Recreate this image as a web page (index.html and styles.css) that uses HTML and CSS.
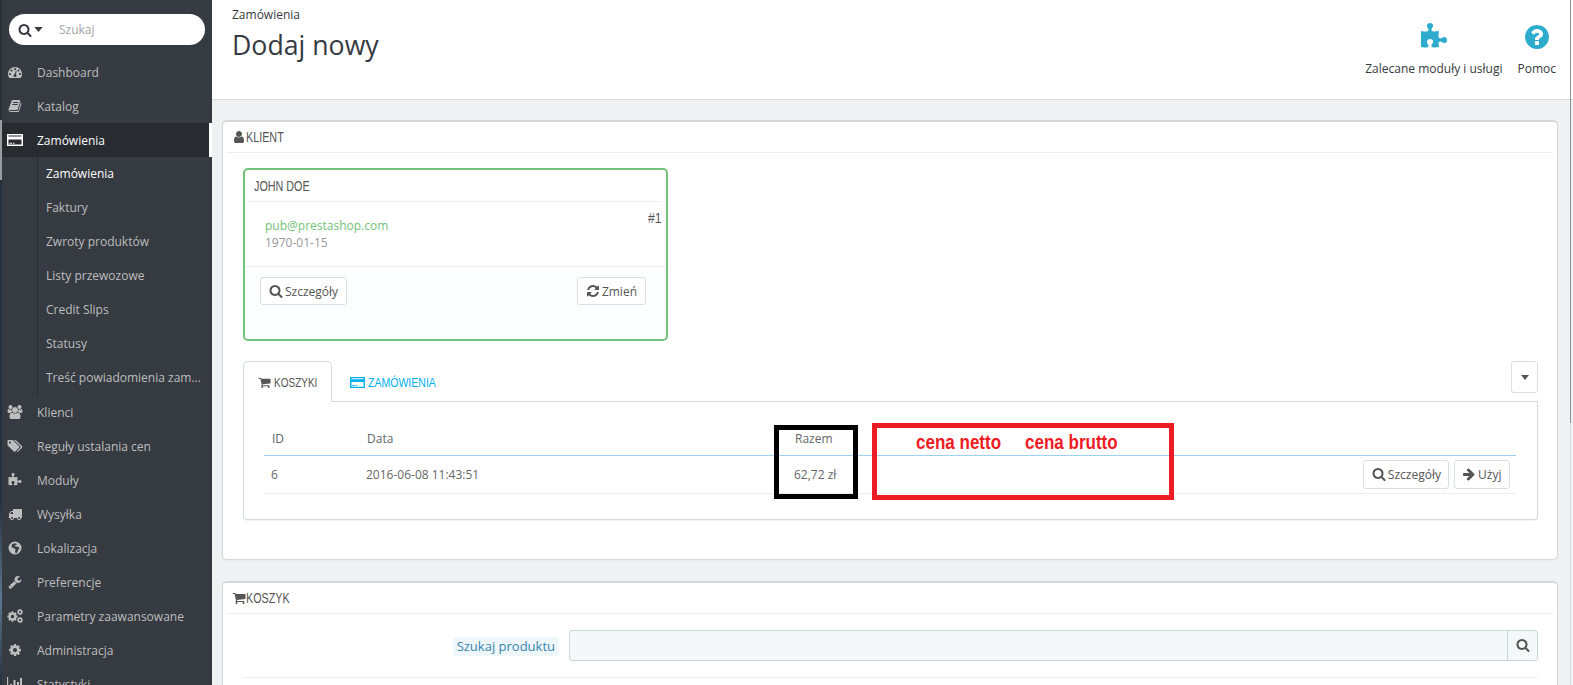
FILE: index.html
```html
<!DOCTYPE html>
<html lang="pl">
<head>
<meta charset="utf-8">
<title>Dodaj nowy</title>
<link rel="stylesheet" href="styles.css">
</head>
<body>
<svg class="sprite" xmlns="http://www.w3.org/2000/svg">
  <symbol id="i-search" viewBox="0 0 1792 1792"><path d="M1216 832q0-185-131.500-316.500t-316.500-131.500-316.500 131.500-131.500 316.500 131.500 316.500 316.500 131.500 316.500-131.500 131.500-316.500zm512 832q0 52-38 90t-90 38q-54 0-90-38l-343-342q-179 124-399 124-143 0-273.500-55.500t-225-150-150-225-55.500-273.500 55.500-273.500 150-225 225-150 273.500-55.500 273.500 55.500 225 150 150 225 55.500 273.500q0 220-124 399l343 343q37 37 37 90z"/></symbol>
  <symbol id="i-user" viewBox="0 0 1792 1792"><path d="M1536 1399q0 109-62.500 187t-150.500 78h-854q-88 0-150.500-78t-62.500-187q0-85 8.500-160.500t31.500-152 58.500-131 94-89 134.500-34.500q131 128 313 128t313-128q76 0 134.500 34.500t94 89 58.500 131 31.500 152 8.500 160.500zm-256-887q0 159-112.500 271.500t-271.500 112.500-271.500-112.500-112.500-271.500 112.500-271.500 271.500-112.500 271.500 112.500 112.500 271.500z"/></symbol>
  <symbol id="i-cart" viewBox="0 0 1792 1792"><path d="M704 1536q0 52-38 90t-90 38-90-38-38-90 38-90 90-38 90 38 38 90zm896 0q0 52-38 90t-90 38-90-38-38-90 38-90 90-38 90 38 38 90zm128-1088v512q0 24-16.500 42.500t-40.500 21.500l-1044 122q13 60 13 70 0 16-24 64h920q26 0 45 19t19 45-19 45-45 19h-1024q-26 0-45-19t-19-45q0-11 8-31.500t16-36 21.500-40 15.500-29.500l-177-823h-204q-26 0-45-19t-19-45 19-45 45-19h256q16 0 28.500 6.500t19.500 15.500 13 24.500 8 26 5.500 29.500 4.500 26h1201q26 0 45 19t19 45z"/></symbol>
  <symbol id="i-card" viewBox="0 0 16 14"><path fill-rule="evenodd" d="M0 1h16v12H0zM1.500 2.500v1h13v-1zM1.500 6.500v5h13v-5zM2.500 9.800h2.500v.9H2.500zM6 9.800h1.500v.9H6z"/></symbol>
  <symbol id="i-refresh" viewBox="0 0 1792 1792"><path d="M1639 1056q0 5-1 7-64 268-268 434.500t-478 166.500q-146 0-282.500-55t-243.500-157l-129 129q-19 19-45 19t-45-19-19-45v-448q0-26 19-45t45-19h448q26 0 45 19t19 45-19 45l-137 137q71 66 161 102t187 36q134 0 250-65t186-179q11-17 53-117 8-23 30-23h192q13 0 22.500 9.500t9.500 22.500zm25-800v448q0 26-19 45t-45 19h-448q-26 0-45-19t-19-45 19-45l138-138q-148-137-349-137-134 0-250 65t-186 179q-11 17-53 117-8 23-30 23h-199q-13 0-22.500-9.500t-9.500-22.500v-7q65-268 270-434.500t480-166.500q146 0 284 55.500t245 156.500l130-129q19-19 45-19t45 19 19 45z"/></symbol>
  <symbol id="i-arrow" viewBox="0 0 1792 1792"><path d="M1600 960q0 54-37 91l-651 651q-39 37-91 37-51 0-90-37l-75-75q-38-38-38-91t38-91l293-293h-704q-52 0-84.500-37.500t-32.500-90.500v-128q0-53 32.500-90.500t84.500-37.500h704l-293-294q-38-36-38-90t38-90l75-75q38-38 90-38 53 0 91 38l651 651q37 35 37 90z"/></symbol>
  <symbol id="i-puzzle" viewBox="0 0 1792 1792"><path d="M1728 1098q0 81-44.500 135t-123.500 54q-41 0-77.500-17.500t-59-38-56.500-38-71-17.500q-110 0-110 124 0 39 16 115t15 115v5q-22 0-33 1-34 3-97.500 11.500t-115.500 13.500-98 5q-61 0-103-26.500t-42-83.500q0-37 17.500-71t38-56.500 38-59 17.500-77.500q0-79-54-123.500t-135-44.500q-84 0-143 45.500t-59 127.500q0 43 15 83t33.500 64.500 33.500 53 15 50.500q0 45-46 89-37 35-117 35-95 0-245-24-9-2-27.500-4t-27.500-4l-13-2q-1 0-3-1-2 0-2-1v-1024q2 1 17.500 3.500t34 5 21.500 3.500q150 24 245 24 80 0 117-35 46-44 46-89 0-22-15-50.500t-33.500-53-33.500-64.500-15-83q0-82 59-127.500t144-45.500q80 0 134 44.500t54 123.500q0 41-17.500 77.500t-38 59-38 56.500-17.500 71q0 57 42 83.500t103 26.500q64 0 180-15t163-17v2q-1 2-3.500 17.500t-5 34-3.500 21.500q-24 150-24 245 0 80 35 117 44 46 89 46 22 0 50.500-15t53-33.500 64.500-33.500 83-15q82 0 127.500 59t45.500 143z"/></symbol>
  <symbol id="i-help" viewBox="0 0 1792 1792"><path d="M1024 1376v-192q0-14-9-23t-23-9h-192q-14 0-23 9t-9 23v192q0 14 9 23t23 9h192q14 0 23-9t9-23zm256-672q0-88-55.500-163t-138.500-116-170-41q-243 0-371 213-15 24 8 42l132 100q7 6 19 6 16 0 25-12 53-68 86-92 34-24 86-24 48 0 85.500 26t37.500 59q0 38-20 61t-68 45q-63 28-115.500 86.500t-52.500 125.500v36q0 14 9 23t23 9h192q14 0 23-9t9-23q0-19 21.500-49.500t54.500-49.500q32-18 49-28.500t46-35 44.500-48 28-60.500 12.500-81zm384 192q0 209-103 385.500t-279.500 279.500-385.500 103-385.500-103-279.500-279.500-103-385.500 103-385.500 279.500-279.500 385.500-103 385.500 103 279.500 279.500 103 385.500z"/></symbol>
  <symbol id="i-gauge" viewBox="0 0 1792 1792"><path d="M384 1152q0-53-37.500-90.500t-90.500-37.500-90.500 37.500-37.500 90.500 37.500 90.500 90.500 37.500 90.500-37.500 37.500-90.500zm192-448q0-53-37.500-90.500t-90.500-37.500-90.500 37.500-37.500 90.500 37.500 90.500 90.500 37.500 90.500-37.500 37.500-90.500zm428 481l101-382q6-26-7.500-48.500t-38.500-29.500-48 6.500-30 39.500l-101 382q-60 5-107 43.500t-63 98.500q-20 77 20 146t117 89 146-20 89-117q16-60-6-117t-72-91zm660-33q0-53-37.500-90.500t-90.500-37.500-90.500 37.500-37.500 90.500 37.500 90.500 90.500 37.500 90.500-37.500 37.500-90.500zm-640-640q0-53-37.500-90.500t-90.500-37.500-90.500 37.500-37.500 90.500 37.500 90.500 90.500 37.500 90.500-37.500 37.500-90.500zm448 192q0-53-37.500-90.500t-90.500-37.500-90.500 37.500-37.500 90.500 37.500 90.500 90.500 37.500 90.500-37.500 37.500-90.500zm320 448q0 261-141 483-19 29-54 29h-1402q-35 0-54-29-141-221-141-483 0-182 71-348t191-286 286-191 348-71 348 71 286 191 191 286 71 348z"/></symbol>
  <symbol id="i-book" viewBox="0 0 1792 1792"><path d="M1703 478q40 57 18 129l-275 906q-19 64-76.500 107.500t-122.500 43.500h-923q-77 0-148.500-53.500t-99.500-131.500q-24-67-2-127 0-4 3-27t4-37q1-8-3-21.500t-3-19.500q2-11 8-21t16.500-23.500 16.500-23.500q23-38 45-91.500t30-91.500q3-10 .5-30t-.5-28q3-11 17-28t17-23q21-36 42-92t25-90q1-9-2.500-32t.5-28q4-13 22-30.500t22-22.500q19-26 42.500-84.500t27.500-96.500q1-8-3-25.500t-2-26.500q2-8 9-18t18-23 17-21q8-12 16.500-30.500t15-35 16-36 19.500-32 26.500-23.500 36-11.500 47.500 5.500l-1 3q38-9 51-9h761q74 0 114 56t18 130l-274 906q-36 119-71.500 153.500t-128.500 34.500h-869q-27 0-38 15-11 16-1 43 24 70 144 70h923q29 0 56-15.500t35-41.500l300-987q7-22 5-57 38 15 59 43zm-1064 2q-4 13 2 22.500t20 9.500h608q13 0 25.500-9.500t16.500-22.500l21-64q4-13-2-22.500t-20-9.500h-608q-13 0-25.500 9.500t-16.500 22.500zm-83 256q-4 13 2 22.500t20 9.500h608q13 0 25.500-9.500t16.500-22.500l21-64q4-13-2-22.500t-20-9.500h-608q-13 0-25.500 9.500t-16.500 22.500z"/></symbol>
  <symbol id="i-users" viewBox="0 0 1920 1792"><path d="M593 896q-162 5-265 128h-134q-82 0-138-40.500t-56-118.500q0-353 124-353 6 0 43.500 21t97.500 42.500 119 21.500q67 0 133-23-5 37-5 66 0 139 81 256zm1071 637q0 120-73 189.500t-194 69.500h-874q-121 0-194-69.500t-73-189.500q0-53 3.500-103.500t14-109 26.500-108.500 43-97.500 62-81 85.500-53.500 111.500-20q10 0 43 21.500t73 48 107 48 135 21.500 135-21.500 107-48 73-48 43-21.500q61 0 111.500 20t85.500 53.500 62 81 43 97.500 26.500 108.500 14 109 3.500 103.500zm-1024-1277q0 106-75 181t-181 75-181-75-75-181 75-181 181-75 181 75 75 181zm704 384q0 159-112.500 271.500t-271.500 112.500-271.500-112.500-112.500-271.500 112.500-271.500 271.500-112.500 271.500 112.500 112.500 271.500zm576 225q0 78-56 118.500t-138 40.500h-134q-103-123-265-128 81-117 81-256 0-29-5-66 66 23 133 23 59 0 119-21.500t97.500-42.500 43.500-21q124 0 124 353zm-128-609q0 106-75 181t-181 75-181-75-75-181 75-181 181-75 181 75 75 181z"/></symbol>
  <symbol id="i-tags" viewBox="0 0 1920 1792"><path d="M448 448q0-53-37.500-90.500t-90.500-37.500-90.500 37.500-37.500 90.500 37.500 90.500 90.500 37.500 90.500-37.500 37.500-90.500zm1067 576q0 53-37 90l-491 492q-39 37-91 37-53 0-90-37l-715-716q-38-37-64.500-101t-26.500-117v-416q0-52 38-90t90-38h416q53 0 117 26.500t102 64.500l715 714q37 39 37 91zm384 0q0 53-37 90l-491 492q-39 37-91 37-36 0-59-14t-53-45l470-470q37-37 37-90 0-52-37-91l-715-714q-38-38-102-64.500t-117-26.500h224q53 0 117 26.500t102 64.500l715 714q37 39 37 91z"/></symbol>
  <symbol id="i-truck" viewBox="0 0 1792 1792"><path d="M640 1408q0-52-38-90t-90-38-90 38-38 90 38 90 90 38 90-38 38-90zm-384-512h384v-256h-158q-13 0-22 9l-195 195q-9 9-9 22v30zm1280 512q0-52-38-90t-90-38-90 38-38 90 38 90 90 38 90-38 38-90zm256-1088v1024q0 15-4 26.500t-13.500 18.500-16.500 11.500-23.500 6-22.500 2-25.500 0-22.500-.5q0 106-75 181t-181 75-181-75-75-181h-384q0 106-75 181t-181 75-181-75-75-181h-64q-3 0-22.500.5t-25.500 0-22.500-2-23.500-6-16.500-11.500-13.500-18.500-4-26.500q0-26 19-45t45-19v-320q0-8-.5-35t0-38 2.500-34.500 6.500-37 14-30.500 22.500-30l198-198q19-19 50.500-32t58.500-13h160v-192q0-26 19-45t45-19h1024q26 0 45 19t19 45z"/></symbol>
  <symbol id="i-globe" viewBox="0 0 14 14"><path fill-rule="evenodd" d="M7 .5a6.500 6.500 0 1 1 0 13a6.500 6.500 0 0 1 0-13zM5.500 2.500 4 3.500 3.500 5.500 5 7l2 .5.5 1.500L7 11l1 1.500 1.500-1.500.5-2 1.500-1.500-1-1.500L8 5.500 6.500 5 7.500 4 9 3.500 8 2.500z"/></symbol>
  <symbol id="i-wrench" viewBox="0 0 1792 1792"><path d="M448 1472q0-26-19-45t-45-19-45 19-19 45 19 45 45 19 45-19 19-45zm644-420l-682 682q-37 37-90 37-52 0-91-37l-106-108q-38-36-38-90 0-53 38-91l681-681q39 98 114.500 173.500t173.500 114.500zm634-435q0 39-23 106-47 134-164.500 217.500t-258.500 83.500q-185 0-316.500-131.500t-131.500-316.500 131.500-316.500 316.500-131.500q58 0 121.500 16.500t107.500 46.500q16 11 16 28t-16 28l-293 169v224l193 107q5-3 79-48.500t135.500-81 70.500-35.500q15 0 23.500 10t8.500 25z"/></symbol>
  <symbol id="i-cog" viewBox="0 0 1792 1792"><path d="M1152 896q0-106-75-181t-181-75-181 75-75 181 75 181 181 75 181-75 75-181zm512-109v222q0 12-8 23t-20 13l-185 28q-19 54-39 91 35 50 107 138 10 12 10 25t-9 23q-27 37-99 108t-94 71q-12 0-26-9l-138-108q-44 23-91 38-16 136-29 186-7 28-36 28h-222q-14 0-24.500-8.500t-11.500-21.500l-28-184q-49-16-90-37l-141 107q-10 9-25 9-14 0-25-11-126-114-165-168-7-10-7-23 0-12 8-23 15-21 51-66.500t54-70.500q-27-50-41-99l-183-27q-13-2-21-12.500t-8-23.500v-222q0-12 8-23t19-13l186-28q14-46 39-92-40-57-107-138-10-12-10-24 0-10 9-23 26-36 98.500-107.500t94.500-71.500q13 0 26 10l138 107q44-23 91-38 16-136 29-186 7-28 36-28h222q14 0 24.500 8.500t11.500 21.500l28 184q49 16 90 37l142-107q9-9 24-9 13 0 25 10 129 119 165 170 7 8 7 22 0 12-8 23-15 21-51 66.500t-54 70.500q26 50 41 98l183 28q13 2 21 12.500t8 23.500z"/></symbol>
  <symbol id="i-cogs" viewBox="0 0 16 14"><use href="#i-cog" x="-.5" y="1.500" width="12" height="12"/><use href="#i-cog" x="9.500" y="-.5" width="7" height="7"/><use href="#i-cog" x="9.500" y="7.500" width="7" height="7"/></symbol>
  <symbol id="i-chart" viewBox="0 0 16 14"><path d="M0 0h1.200v12.800H16V14H0zM3 7h2v5H3zM6.500 3h2v9h-2zM10 5h2v7h-2zM13 1h2v11h-2z"/></symbol>
  <symbol id="i-caret" viewBox="0 0 10 6"><path d="M0 0h10L5 6z"/></symbol>
</svg>

<div class="app">
  <aside class="sidebar">
    <div class="search">
      <svg class="search-icon"><use href="#i-search"/></svg>
      <svg class="search-caret"><use href="#i-caret"/></svg>
      <span class="search-text">Szukaj</span>
    </div>
    <nav class="menu">
      <a class="item"><svg class="ico"><use href="#i-gauge"/></svg>Dashboard</a>
      <a class="item"><svg class="ico"><use href="#i-book"/></svg>Katalog</a>
      <a class="item item-active"><svg class="ico"><use href="#i-card"/></svg>Zamówienia</a>
      <div class="submenu">
        <a class="sub sub-active">Zamówienia</a>
        <a class="sub">Faktury</a>
        <a class="sub">Zwroty produktów</a>
        <a class="sub">Listy przewozowe</a>
        <a class="sub">Credit Slips</a>
        <a class="sub">Statusy</a>
        <a class="sub">Treść powiadomienia zam...</a>
      </div>
      <a class="item"><svg class="ico"><use href="#i-users"/></svg>Klienci</a>
      <a class="item"><svg class="ico"><use href="#i-tags"/></svg>Reguły ustalania cen</a>
      <a class="item"><svg class="ico"><use href="#i-puzzle"/></svg>Moduły</a>
      <a class="item"><svg class="ico"><use href="#i-truck"/></svg>Wysyłka</a>
      <a class="item"><svg class="ico"><use href="#i-globe"/></svg>Lokalizacja</a>
      <a class="item"><svg class="ico"><use href="#i-wrench"/></svg>Preferencje</a>
      <a class="item"><svg class="ico"><use href="#i-cogs"/></svg>Parametry zaawansowane</a>
      <a class="item"><svg class="ico"><use href="#i-cog"/></svg>Administracja</a>
      <a class="item"><svg class="ico"><use href="#i-chart"/></svg>Statystyki</a>
    </nav>
  </aside>

  <main class="main">
    <header class="pagehead">
      <div class="titles">
        <div class="crumb">Zamówienia</div>
        <h1 class="title">Dodaj nowy</h1>
      </div>
      <div class="toolbar">
        <a class="tool"><svg class="tool-ico"><use href="#i-puzzle"/></svg><span>Zalecane moduły i usługi</span></a>
        <a class="tool"><svg class="tool-ico"><use href="#i-help"/></svg><span>Pomoc</span></a>
      </div>
    </header>

    <div class="content">
      <section class="panel panel-client">
        <h2 class="panel-head"><svg class="head-ico"><use href="#i-user"/></svg><span class="cond">KLIENT</span></h2>
        <div class="client-card">
          <div class="client-name"><span class="cond">JOHN DOE</span></div>
          <div class="client-body">
            <div class="client-info">
              <div class="client-mail">pub@prestashop.com</div>
              <div class="client-date">1970-01-15</div>
            </div>
            <div class="client-id">#1</div>
          </div>
          <div class="client-foot">
            <a class="btn"><svg class="btn-ico"><use href="#i-search"/></svg>Szczegóły</a>
            <a class="btn"><svg class="btn-ico"><use href="#i-refresh"/></svg>Zmień</a>
          </div>
        </div>

        <div class="tabbar">
          <a class="tab tab-active"><svg class="tab-ico"><use href="#i-cart"/></svg><span class="cond">KOSZYKI</span></a>
          <a class="tab tab-link"><svg class="tab-ico"><use href="#i-card"/></svg><span class="cond cond-wide">ZAMÓWIENIA</span></a>
          <a class="btn btn-drop"><svg class="caret-ico"><use href="#i-caret"/></svg></a>
        </div>
        <div class="pane">
          <table class="carts">
            <thead>
              <tr><th class="c-id">ID</th><th class="c-date">Data</th><th class="c-sum">Razem</th><th></th></tr>
            </thead>
            <tbody>
              <tr>
                <td class="c-id">6</td>
                <td class="c-date">2016-06-08 11:43:51</td>
                <td class="c-sum">62,72 zł</td>
                <td class="c-act">
                  <a class="btn btn-row"><svg class="btn-ico"><use href="#i-search"/></svg>Szczegóły</a>
                  <a class="btn btn-row"><svg class="btn-ico"><use href="#i-arrow"/></svg>Użyj</a>
                </td>
              </tr>
            </tbody>
          </table>
          <div class="mark mark-black"></div>
          <div class="mark mark-red"><span class="cond-red">cena netto</span><span class="cond-red">cena brutto</span></div>
        </div>
      </section>

      <section class="panel panel-cart">
        <h2 class="panel-head"><svg class="head-ico"><use href="#i-cart"/></svg><span class="cond">KOSZYK</span></h2>
        <div class="form-row">
          <label class="form-label"><span>Szukaj produktu</span></label>
          <div class="input-group">
            <div class="input"></div>
            <div class="addon"><svg class="addon-ico"><use href="#i-search"/></svg></div>
          </div>
        </div>
        <div class="form-rule"></div>
      </section>
    </div>
    <div class="scrollbar"><div class="thumb"></div></div>
  </main>
</div>
</body>
</html>
```

FILE: styles.css
```css
* { box-sizing: border-box; }
html, body { margin: 0; height: 100%; overflow: hidden; }
body { font-family: "Open Sans", sans-serif; font-size: 12px; color: #555; background: #eff1f2; }
a { text-decoration: none; color: inherit; }
svg { fill: currentColor; display: block; flex: none; }
.sprite { width: 0; height: 0; position: absolute; }

.app { display: flex; height: 685px; overflow: hidden; }

.cond {
  display: inline-block; transform: scaleX(.77); transform-origin: 0 50%; white-space: nowrap;
  font-family: "Liberation Sans", sans-serif;
}
.cond-wide { transform: scaleX(.81); }
.cond-red {
  display: inline-block; transform: scaleX(.81); transform-origin: 0 50%; white-space: nowrap;
}

/* sidebar */
.sidebar {
  width: 212px; flex: none; height: 720px; padding-left: 2px;
  background: #363a41 linear-gradient(to bottom, #2a3032 0, #2a3032 120px, #9a9da0 120px, #9a9da0 180px, #24303c 180px, #24303c 500px, #5d7690 600px, #24303c 685px) no-repeat 0 0 / 2px 100%;
  background-color: #363a41;
}
.search {
  display: flex; align-items: center; height: 31px; margin: 14px 7px 10px 7px;
  background: #fff; border-radius: 16px; padding-left: 9px; color: #363a41;
}
.search-icon { width: 14px; height: 14px; }
.search-caret { width: 9px; height: 5px; margin-left: 2px; }
.search-text { margin-left: 16px; color: #a3a3a3; font-size: 12px; }
.menu { display: flex; flex-direction: column; }
.item {
  display: flex; align-items: center; height: 34px; padding-left: 5px; color: #bebebe; font-size: 12px; flex: none;
}
.ico { width: 16px; height: 14px; margin-right: 14px; color: #bebebe; }
.item-active { background: #282b30; color: #fff; border-right: 3px solid #fff; }
.item-active .ico { color: #fff; }
.submenu { margin-left: 35px; border-left: 1px solid #282b30; display: flex; flex-direction: column; }
.sub { height: 34px; display: flex; align-items: center; padding: 0 0 2px 8px; color: #bebebe; font-size: 12px; white-space: nowrap; }
.sub-active { color: #fff; }

/* main */
.main { flex: 1; min-width: 0; position: relative; }
.pagehead {
  height: 100px; background: #fff; border-bottom: 1px solid #d8dadb; padding: 7px 17px 0 20px;
  display: flex; justify-content: space-between;
}
.crumb { font-size: 12px; color: #363a41; line-height: 16px; }
.title { margin: 6px 0 0; font-size: 26.700px; line-height: 32px; font-weight: 400; color: #363a41; }
.toolbar { display: flex; gap: 15px; padding-top: 16px; }
.tool { display: flex; flex-direction: column; align-items: center; color: #363a41; font-size: 12px; }
.tool-ico { width: 28px; height: 28px; color: #2eacce; margin-bottom: 10px; }
.tool span { line-height: 16px; }

.content { padding: 20px 15px 0 10px; }
.panel {
  background: #fff; border: 1px solid #d3d8db; border-top-width: 2px; border-radius: 5px; padding: 0 4px;
  box-shadow: 0 2px 0 rgba(0,0,0,.02);
}
.panel-client { height: 440px; }
.panel-cart { margin-top: 21px; height: 200px; }
.panel-head {
  display: flex; align-items: center; margin: 0; height: 31px; padding-left: 5px;
  border-bottom: 1px solid #eee; font-size: 14px; font-weight: 400; color: #555; line-height: 1;
}
.head-ico { width: 14px; height: 14px; }

.client-card {
  width: 425px; height: 173px; margin: 15px 0 0 16px; border: 2px solid #72c279; border-radius: 5px;
  display: flex; flex-direction: column; background: #fff;
}
.client-name {
  height: 32px; margin: 0 4px; padding: 0 5px; display: flex; align-items: center; border-bottom: 1px solid #eee;
  font-size: 14px; color: #555;
}
.client-body { height: 64px; padding: 8px 4px 0 20px; display: flex; justify-content: space-between; }
.client-info { padding-top: 7px; }
.client-mail { color: #72c279; line-height: 17px; }
.client-date { color: #999; line-height: 17px; }
.client-id { font-family: "Liberation Sans", sans-serif; font-size: 14px; color: #555; line-height: 16px; transform: scaleX(.87); transform-origin: 100% 50%; }
.client-foot {
  flex: 1; border-top: 1px solid #eee; background: #fcfdfe; border-radius: 0 0 4px 4px;
  padding: 10px 20px 0 15px; display: flex; justify-content: space-between; align-items: flex-start;
}
.btn {
  display: inline-flex; align-items: center; height: 28px; padding: 0 8px; gap: 2px; background: #fff;
  border: 1px solid #dcdfe1; border-radius: 3px; color: #555; font-size: 12px; white-space: nowrap;
}
.btn-ico { width: 14px; height: 14px; color: #555; }

.tabbar {
  position: relative; display: flex; align-items: flex-end; margin: 20px 15px 0 16px; height: 41px;
  border-bottom: 1px solid #d3d8db;
}
.tab {
  display: flex; align-items: center; height: 41px; padding: 2px 13px 0; gap: 2px;
  font-size: 13px; margin-bottom: -1px;
}
.tab-active { width: 89px; background: #fff; border: 1px solid #d3d8db; border-bottom-color: #fff; border-radius: 5px 5px 0 0; color: #555; }
.tab-link { color: #00aff0; padding-left: 18px; gap: 3px; }
.tab-ico { width: 15px; height: 13px; }
.btn-drop {
  position: absolute; right: 0; top: 0; width: 27px; height: 32px; padding: 0; justify-content: center;
}
.caret-ico { width: 8px; height: 5px; color: #555; }

.pane {
  position: relative; height: 118px; margin: 0 15px 0 16px; padding: 23px 21px 0 20px;
  border: 1px solid #d3d8db; border-top: 0; border-radius: 0 0 4px 4px; box-shadow: 0 1px 1px rgba(0,0,0,.05);
}
.carts { width: 100%; border-collapse: collapse; color: #666; font-size: 12px; table-layout: fixed; }
.carts th { height: 30px; font-weight: 400; text-align: left; padding: 0 0 2px; border-bottom: 1px solid #a0d0eb; color: #666; }
.carts td { height: 38px; padding: 0; border-bottom: 1px solid #eee; }
.c-id { width: 102px; padding-left: 7px !important; }
.carts th.c-id { padding-left: 8px !important; }
.c-date { width: 427px; }
.carts th.c-date { padding-left: 1px; }
.c-sum { width: 150px; padding-left: 1px !important; }
.carts th.c-sum { padding-left: 2px !important; }
.c-act { text-align: right; padding-right: 6px !important; }
.btn-row { height: 29px; margin-left: 1px; padding: 0 7.500px; }
.mark { position: absolute; }
.mark-black { left: 530px; top: 23px; width: 84px; height: 74px; border: 5px solid #000; }
.mark-red {
  left: 628px; top: 21px; width: 302px; height: 77px; border: 5px solid #ed1c24;
  padding: 4px 0 0 39px; display: flex; gap: 4px; color: #ed1c24;
  font-family: "Liberation Sans", sans-serif; font-weight: 700; font-size: 21px; line-height: 20px;
}

.form-row { display: flex; align-items: center; margin: 15px 15px 0 16px; height: 32px; }
.form-label { width: 326px; text-align: right; padding: 3px 10px 0 0; }
.form-label span { display: inline-block; font-size: 13px; line-height: 19px; padding: 0 4px; background: #eff7fb; border-radius: 3px; color: #3586ae; }
.input-group { flex: 1; display: flex; height: 31px; border: 1px solid #c7d6db; border-radius: 3px; background: #f5f8f9; }
.input { flex: 1; }
.addon { width: 30px; border-left: 1px solid #c7d6db; display: flex; align-items: center; justify-content: center; color: #555; }
.addon-ico { width: 14px; height: 14px; }
.form-rule { margin: 16px 15px 0 16px; border-top: 1px solid #eee; }

.scrollbar { position: absolute; top: 0; right: 2px; bottom: 0; width: 1px; background: #dcdcdc; }
.thumb { height: 423px; background: #8f8f8f; }
```
